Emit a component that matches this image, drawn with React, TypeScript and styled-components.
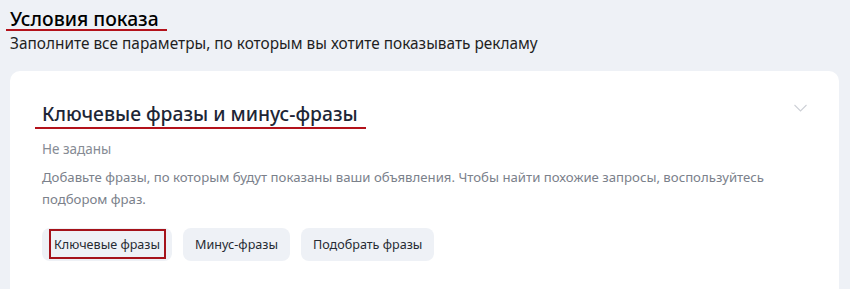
import { createGlobalStyle, styled } from 'styled-components';

const GlobalStyle = createGlobalStyle`
  html, body {
    margin: 0;
    padding: 0;
    background: #eef1f6;
    font-family: 'Noto Sans', 'Open Sans', sans-serif;
  }
`;

const BUTTONS = ['Ключевые фразы', 'Минус-фразы', 'Подобрать фразы'];

const ChevronIcon = () => (
  <svg width="13" height="8" viewBox="0 0 13 8" fill="none">
    <path d="M0.5 1l6 6 6-6" stroke="#cdd0d6" strokeWidth="1.1" />
  </svg>
);

const App = () => {
  return (
    <Page>
      <GlobalStyle />
      <Header>
        <Title>Условия показа</Title>
        <Subtitle>Заполните все параметры, по которым вы хотите показывать рекламу</Subtitle>
      </Header>
      <Card>
        <CardHead>
          <CardTitle>Ключевые фразы и минус-фразы</CardTitle>
          <ChevronIcon />
        </CardHead>
        <Status>Не заданы</Status>
        <Hint>
          Добавьте фразы, по которым будут показаны ваши объявления. Чтобы найти похожие запросы,
          воспользуйтесь подбором фраз.
        </Hint>
        <Actions>
          {BUTTONS.map((label, i) => (
            <Action key={label} $marked={i === 0}>
              {label}
            </Action>
          ))}
        </Actions>
      </Card>
    </Page>
  );
};

export default App;

const Page = styled.div`
  height: 289px;
  overflow: hidden;
  padding: 0 11px 0 10px;
`;

const Header = styled.div`
  padding-top: 6px;
`;

const Title = styled.h1`
  position: relative;
  display: inline-block;
  margin: 0;
  font-size: 19.3px;
  font-weight: 500;
  line-height: 26px;
  color: #000;

  &::after {
    content: '';
    position: absolute;
    left: -4px;
    right: -8px;
    bottom: 1px;
    height: 2px;
    background: #b3121b;
  }
`;

const Subtitle = styled.p`
  margin: 2px 0 0;
  font-size: 15.4px;
  line-height: 20px;
  color: #1f1f1f;
`;

const Card = styled.div`
  margin-top: 17px;
  min-height: 260px;
  padding: 28px 32px 0;
  background: #fff;
  border-radius: 10px;
`;

const CardHead = styled.div`
  display: flex;
  justify-content: space-between;
  align-items: center;

  svg {
    margin-top: -12px;
  }
`;

const CardTitle = styled.h2`
  position: relative;
  margin: 0;
  font-size: 19.3px;
  font-weight: 500;
  line-height: 30px;
  color: #1d2636;

  &::after {
    content: '';
    position: absolute;
    left: -7px;
    right: -8px;
    bottom: 0;
    height: 2px;
    background: #b3121b;
  }
`;

const Status = styled.div`
  margin-top: 11px;
  font-size: 13.5px;
  line-height: 18px;
  color: #868b94;
`;

const Hint = styled.p`
  margin: 8px 0 0;
  font-size: 13.2px;
  line-height: 22px;
  color: #7b818b;
`;

const Actions = styled.div`
  display: flex;
  gap: 11px;
  margin-top: 18px;
`;

const Action = styled.button<{ $marked?: boolean }>`
  position: relative;
  height: 33px;
  padding: 0 12px;
  border: none;
  border-radius: 8px;
  background: #eef1f6;
  font-family: inherit;
  font-size: 12.6px;
  color: #262b33;

  ${({ $marked }) =>
    $marked &&
    `
    &::after {
      content: '';
      position: absolute;
      left: 7px;
      right: 6px;
      top: 1px;
      bottom: 2px;
      border: 2px solid #a5121a;
    }
  `}
`;
